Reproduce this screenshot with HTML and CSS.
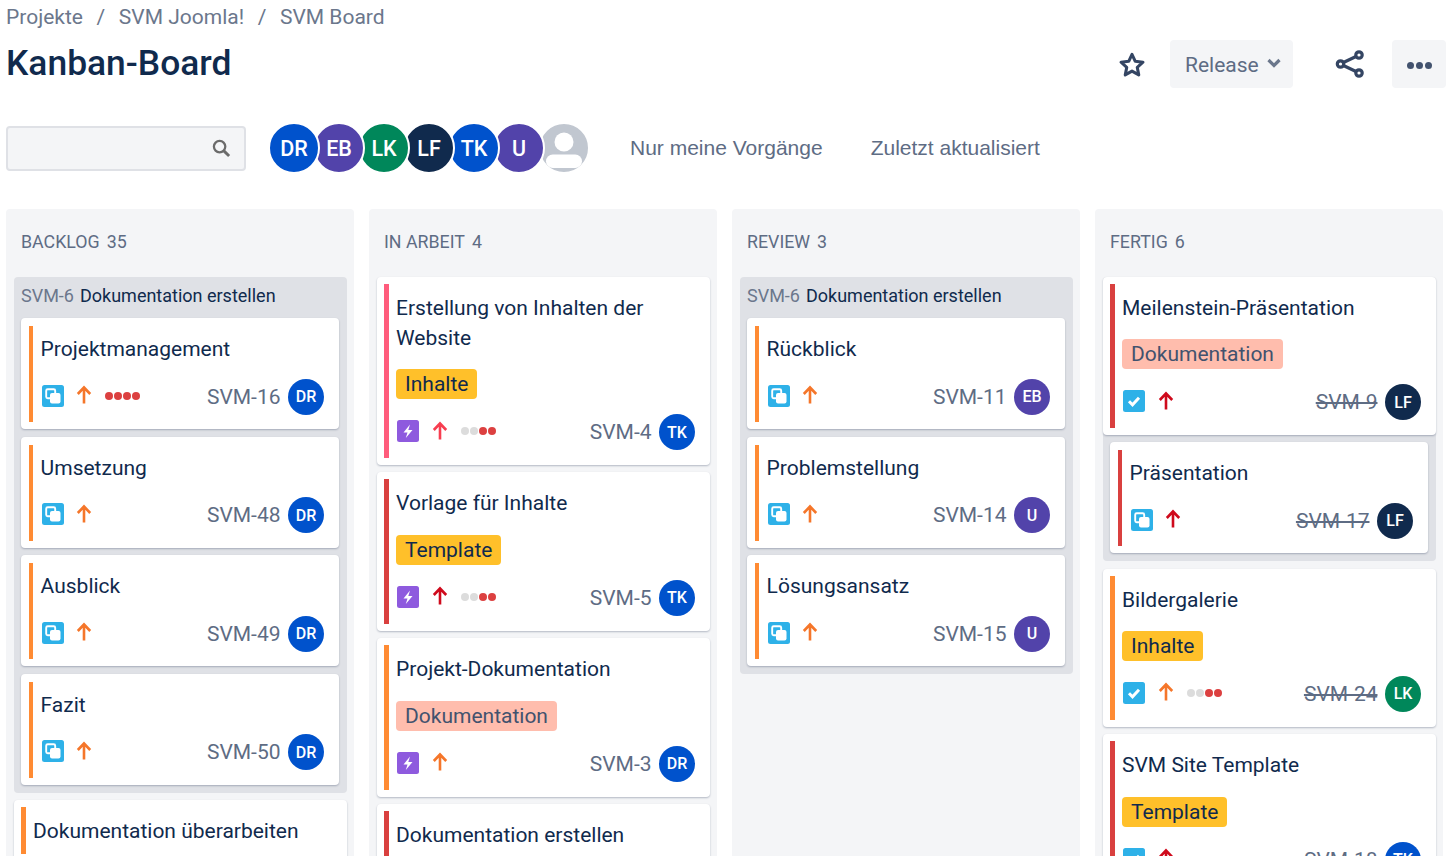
FILE: index.html
```html
<!DOCTYPE html>
<html lang="de">
<head>
<meta charset="utf-8">
<title>Kanban-Board</title>
<link rel="stylesheet" href="styles.css">
</head>
<body>
<svg class="defs" aria-hidden="true">
  <symbol id="i-sub" viewBox="0 0 22 22"><rect width="22" height="22" rx="2.5" fill="#2eb1e8"/><rect x="4.200" y="4.200" width="9" height="9" rx="1.500" fill="none" stroke="#fff" stroke-width="1.900"/><rect x="8" y="8" width="10.500" height="10.500" rx="2" fill="#fff"/></symbol>
  <symbol id="i-bolt" viewBox="0 0 22 22"><rect width="22" height="22" rx="2.5" fill="#8e5ade"/><path d="M13 4.500 6.500 12.500h4L8.800 18l6.700-8h-4.200z" fill="#fff"/></symbol>
  <symbol id="i-check" viewBox="0 0 22 22"><rect width="22" height="22" rx="2.5" fill="#2eb1e8"/><path d="m6 11.300 3.500 3.500L16 7.800" fill="none" stroke="#fff" stroke-width="3"/></symbol>
  <symbol id="i-up" viewBox="0 0 16 20"><path d="M8 18.500V3M1.800 9 8 2.500 14.200 9" fill="none" stroke="currentColor" stroke-width="2.600"/></symbol>
</svg>
<div class="page">
  <nav class="crumbs"><span>Projekte</span><span class="sep">/</span><span>SVM Joomla!</span><span class="sep">/</span><span>SVM Board</span></nav>
  <header class="head">
    <h1 class="title">Kanban-Board</h1>
    <div class="actions">
      <svg class="star" viewBox="0 0 24 24"><path d="m12 2.800 2.800 6 6.600.8-4.900 4.400 1.300 6.500-5.800-3.300-5.800 3.300 1.300-6.500L2.600 9.600l6.600-.8z" fill="none" stroke="#344563" stroke-width="2.600" stroke-linejoin="round"/></svg>
      <button class="btn release"><span class="rel-t">Release</span><svg class="chev" viewBox="0 0 14 10"><path d="m1.500 2 5.500 5.500L12.500 2" fill="none" stroke="#6b778c" stroke-width="3.200"/></svg></button>
      <svg class="share" viewBox="0 0 30 30"><g fill="none" stroke="#344563" stroke-width="3.200"><circle cx="24" cy="6" r="3.200"/><circle cx="24" cy="24" r="3.200"/><circle cx="5.500" cy="15" r="3.200"/><path d="M8.400 13.500 21 7.500M8.400 16.500 21 22.500"/></g></svg>
      <button class="btn more"><i></i><i></i><i></i></button>
    </div>
  </header>
  <div class="filters">
    <div class="search"><svg class="mag" viewBox="0 0 20 20"><circle cx="8" cy="8" r="6" fill="none" stroke="#6b6b6b" stroke-width="2.400"/><path d="m12.500 12.500 5.500 5.500" stroke="#6b6b6b" stroke-width="3"/></svg></div>
    <div class="people">
      <span class="av big blue">DR</span><span class="av big violet">EB</span><span class="av big green">LK</span><span class="av big navy">LF</span><span class="av big blue">TK</span><span class="av big violet">U</span>
      <span class="av big grey"><svg viewBox="0 0 48 48"><circle cx="24" cy="18" r="9.500" fill="#fff"/><rect x="6" y="30.500" width="36" height="13.500" rx="6.750" fill="#fff"/></svg></span>
    </div>
    <a class="flink">Nur meine Vorgänge</a>
    <a class="flink">Zuletzt aktualisiert</a>
  </div>
  <main class="board">
    <section class="col">
      <h2 class="col-h">Backlog <span class="cnt">35</span></h2>
      <div class="group">
        <div class="group-h"><span class="gid">SVM-6</span> Dokumentation erstellen</div>
        <div class="subs">
          <article class="card sub"><div class="inner orange"><div class="t">Projektmanagement</div><div class="foot"><svg class="ti"><use href="#i-sub"/></svg><svg class="pr p-o"><use href="#i-up"/></svg><span class="dots"><b></b><b></b><b></b><b></b></span><span class="id">SVM-16</span><span class="av blue">DR</span></div></div></article>
          <article class="card sub"><div class="inner orange"><div class="t">Umsetzung</div><div class="foot"><svg class="ti"><use href="#i-sub"/></svg><svg class="pr p-o"><use href="#i-up"/></svg><span class="id">SVM-48</span><span class="av blue">DR</span></div></div></article>
          <article class="card sub"><div class="inner orange"><div class="t">Ausblick</div><div class="foot"><svg class="ti"><use href="#i-sub"/></svg><svg class="pr p-o"><use href="#i-up"/></svg><span class="id">SVM-49</span><span class="av blue">DR</span></div></div></article>
          <article class="card sub"><div class="inner orange"><div class="t">Fazit</div><div class="foot"><svg class="ti"><use href="#i-sub"/></svg><svg class="pr p-o"><use href="#i-up"/></svg><span class="id">SVM-50</span><span class="av blue">DR</span></div></div></article>
        </div>
      </div>
      <div class="stack after-group">
        <article class="card"><div class="inner orange wide"><div class="t">Dokumentation überarbeiten</div></div></article>
      </div>
    </section>

    <section class="col">
      <h2 class="col-h">In Arbeit <span class="cnt">4</span></h2>
      <div class="stack">
        <article class="card"><div class="inner pink wide"><div class="t">Erstellung von Inhalten der Website</div><span class="label yellow">Inhalte</span><div class="foot"><svg class="ti"><use href="#i-bolt"/></svg><svg class="pr p-h"><use href="#i-up"/></svg><span class="dots"><b class="off"></b><b class="off"></b><b></b><b></b></span><span class="id">SVM-4</span><span class="av blue">TK</span></div></div></article>
        <article class="card"><div class="inner red wide"><div class="t">Vorlage für Inhalte</div><span class="label yellow">Template</span><div class="foot"><svg class="ti"><use href="#i-bolt"/></svg><svg class="pr p-r"><use href="#i-up"/></svg><span class="dots"><b class="off"></b><b class="off"></b><b></b><b></b></span><span class="id">SVM-5</span><span class="av blue">TK</span></div></div></article>
        <article class="card"><div class="inner orange wide"><div class="t">Projekt-Dokumentation</div><span class="label rose">Dokumentation</span><div class="foot"><svg class="ti"><use href="#i-bolt"/></svg><svg class="pr p-o"><use href="#i-up"/></svg><span class="id">SVM-3</span><span class="av blue">DR</span></div></div></article>
        <article class="card"><div class="inner red wide"><div class="t">Dokumentation erstellen</div></div></article>
      </div>
    </section>

    <section class="col">
      <h2 class="col-h">Review <span class="cnt">3</span></h2>
      <div class="group">
        <div class="group-h"><span class="gid">SVM-6</span> Dokumentation erstellen</div>
        <div class="subs">
          <article class="card sub"><div class="inner orange"><div class="t">Rückblick</div><div class="foot"><svg class="ti"><use href="#i-sub"/></svg><svg class="pr p-o"><use href="#i-up"/></svg><span class="id">SVM-11</span><span class="av violet">EB</span></div></div></article>
          <article class="card sub"><div class="inner orange"><div class="t">Problemstellung</div><div class="foot"><svg class="ti"><use href="#i-sub"/></svg><svg class="pr p-o"><use href="#i-up"/></svg><span class="id">SVM-14</span><span class="av violet">U</span></div></div></article>
          <article class="card sub"><div class="inner orange"><div class="t">Lösungsansatz</div><div class="foot"><svg class="ti"><use href="#i-sub"/></svg><svg class="pr p-o"><use href="#i-up"/></svg><span class="id">SVM-15</span><span class="av violet">U</span></div></div></article>
        </div>
      </div>
    </section>

    <section class="col">
      <h2 class="col-h">Fertig <span class="cnt">6</span></h2>
      <div class="group parent">
        <article class="card"><div class="inner red wide"><div class="t">Meilenstein-Präsentation</div><span class="label rose">Dokumentation</span><div class="foot"><svg class="ti"><use href="#i-check"/></svg><svg class="pr p-r"><use href="#i-up"/></svg><span class="id done">SVM-9</span><span class="av navy">LF</span></div></div></article>
        <div class="subs">
          <article class="card sub"><div class="inner red"><div class="t">Präsentation</div><div class="foot"><svg class="ti"><use href="#i-sub"/></svg><svg class="pr p-r"><use href="#i-up"/></svg><span class="id done">SVM-17</span><span class="av navy">LF</span></div></div></article>
        </div>
      </div>
      <div class="stack after-group after-parent">
        <article class="card"><div class="inner orange wide"><div class="t">Bildergalerie</div><span class="label yellow">Inhalte</span><div class="foot"><svg class="ti"><use href="#i-check"/></svg><svg class="pr p-o"><use href="#i-up"/></svg><span class="dots"><b class="off"></b><b class="off"></b><b></b><b></b></span><span class="id done">SVM-24</span><span class="av green">LK</span></div></div></article>
        <article class="card"><div class="inner red wide"><div class="t">SVM Site Template</div><span class="label yellow">Template</span><div class="foot"><svg class="ti"><use href="#i-check"/></svg><svg class="pr p-r"><use href="#i-up"/></svg><span class="id done">SVM-18</span><span class="av blue">TK</span></div></div></article>
      </div>
    </section>
  </main>
</div>
</body>
</html>
```

FILE: styles.css
```css
* { box-sizing: border-box; }
html, body { margin: 0; height: 859px; overflow: hidden; background: #fff; }
body { font-family: Roboto, "Liberation Sans", sans-serif; color: #102a4d; }
.defs { display: none; }
.page { height: 856px; overflow: hidden; padding-left: 6px; }

.crumbs { display: flex; height: 34px; align-items: center; font-size: 21px; color: #6b778c; }
.sep { margin: 0 13.6px; }

.head { display: flex; justify-content: space-between; height: 74px; padding-right: 4px; }
.title { margin: 7px 0 0; font-size: 35.4px; line-height: 44px; font-weight: 500; color: #102a4d; height: 44px; }
.actions { display: flex; align-items: flex-start; padding-top: 6px; }
.star { width: 28px; height: 28px; margin: 11px 24px 0 0; }
.btn { border: 0; background: #f4f5f7; border-radius: 4px; height: 48px; font: inherit; padding: 0; }
.release { width: 123px; display: flex; align-items: center; gap: 8px; padding: 2px 0 0 15px; font-size: 21px; color: #5e6c84; }
.chev { width: 14px; height: 10px; margin-top: -5px; }
.share { width: 30px; height: 30px; margin: 9px 27px 0 42px; }
.more { width: 54px; display: flex; align-items: center; justify-content: center; gap: 2px; padding-top: 3px; }
.more i { width: 7px; height: 7px; border-radius: 50%; background: #42526e; }

.filters { display: flex; align-items: center; height: 48px; margin-top: 16px; }
.search { width: 240px; height: 45px; background: #f4f5f7; border: 2px solid #dfe1e6; border-radius: 4px; display: flex; align-items: center; justify-content: flex-end; padding-right: 13px; margin-right: 22px; }
.mag { width: 19px; height: 19px; }
.people { display: flex; margin-right: 47px; }
.av { flex: none; display: flex; align-items: center; justify-content: center; width: 36px; height: 36px; border-radius: 50%; color: #fff; font-size: 16px; font-weight: 500; }
.av.big { width: 52px; height: 52px; font-size: 21.5px; font-weight: 500; border: 2px solid #fff; margin: -2px -7px -2px 0; }
.av.big:nth-child(1) { z-index: 7; }
.av.big:nth-child(2) { z-index: 6; }
.av.big:nth-child(3) { z-index: 5; }
.av.big:nth-child(4) { z-index: 4; }
.av.big:nth-child(5) { z-index: 3; }
.av.big:nth-child(6) { z-index: 2; }
.av.big:nth-child(7) { z-index: 1; }
.av.grey { background: #c1c7d0; overflow: hidden; }
.av.grey svg { width: 48px; height: 48px; }
.blue { background: #0052cc; }
.violet { background: #5243aa; }
.green { background: #00875a; }
.navy { background: #102a4d; }
.flink { font-family: "Liberation Sans", Arial, sans-serif; font-size: 21px; color: #5e6c84; margin-right: 48px; }

.board { display: grid; grid-template-columns: repeat(4, 348px); gap: 15px; margin-top: 37px; align-items: stretch; }
.col { background: #f4f5f7; border-radius: 4px 4px 0 0; height: 647px; padding: 0 7px 0 8px; }
.col-h { margin: 0; height: 68px; display: flex; align-items: center; gap: 7px; padding: 0 0 4px 7px; font-size: 17.8px; font-weight: 400; text-transform: uppercase; color: #5e6c84; }
.cnt { font-weight: 400; }

.group { background: #dfe1e6; border-radius: 4px; padding-bottom: 8px; }
.group-h { height: 37px; display: flex; align-items: center; gap: 6px; padding: 0 0 0 7px; margin-bottom: 4px; font-size: 18px; color: #102a4d; }
.gid { color: #6b778c; }
.subs { display: flex; flex-direction: column; gap: 7.5px; padding: 0 8px 0 7px; }
.parent .subs { padding-top: 6.7px; }
.stack { display: flex; flex-direction: column; gap: 7.5px; }
.after-group { margin-top: 7px; }
.after-parent { margin-top: 7.6px; }

.card { background: #fff; border-radius: 4px; padding: 7px; box-shadow: 0 1px 2px rgba(9, 30, 66, .28); }
.sub { height: 111px; padding: 8px 8px 7px 8px; }
.inner { border-left: 4px solid; padding: 9px 7px 8px 7.6px; height: 100%; }
.wide { border-left-width: 5px; padding: 10px 8px 7.9px 7px; }
.orange { border-left-color: #ff8b33; }
.red { border-left-color: #d9403f; }
.pink { border-left-color: #ff5c7c; }
.t { font-size: 21px; line-height: 29.7px; color: #102a4d; }
.label { display: inline-block; height: 30px; line-height: 30px; margin-top: 15.7px; padding: 0 9px; border-radius: 4px; font-size: 21px; vertical-align: top; }
.yellow { background: #ffc02a; color: #102a4d; }
.rose { background: #ffbdad; color: #42526e; }
.foot { display: flex; align-items: center; margin-top: 14px; }
.wide .foot { margin-top: 15px; }
.ti { width: 22px; height: 22px; margin: -2px 0 0 1px; flex: none; }
.pr { width: 16px; height: 20px; margin: -3px 0 0 12px; flex: none; }
.wide .pr { margin-left: 13px; }
.p-o { color: #f5762a; }
.p-r { color: #cf0a1c; }
.p-h { color: #f73e50; }
.dots { display: flex; gap: 1px; margin: -2px 0 0 13px; }
.id { margin-left: auto; margin-right: 7.5px; font-size: 21px; color: #5e6c84; }
.dots b { width: 8px; height: 8px; border-radius: 50%; background: #dc4040; }
.dots b.off { background: #dcdcdc; }
.done { text-decoration: line-through; }
```
